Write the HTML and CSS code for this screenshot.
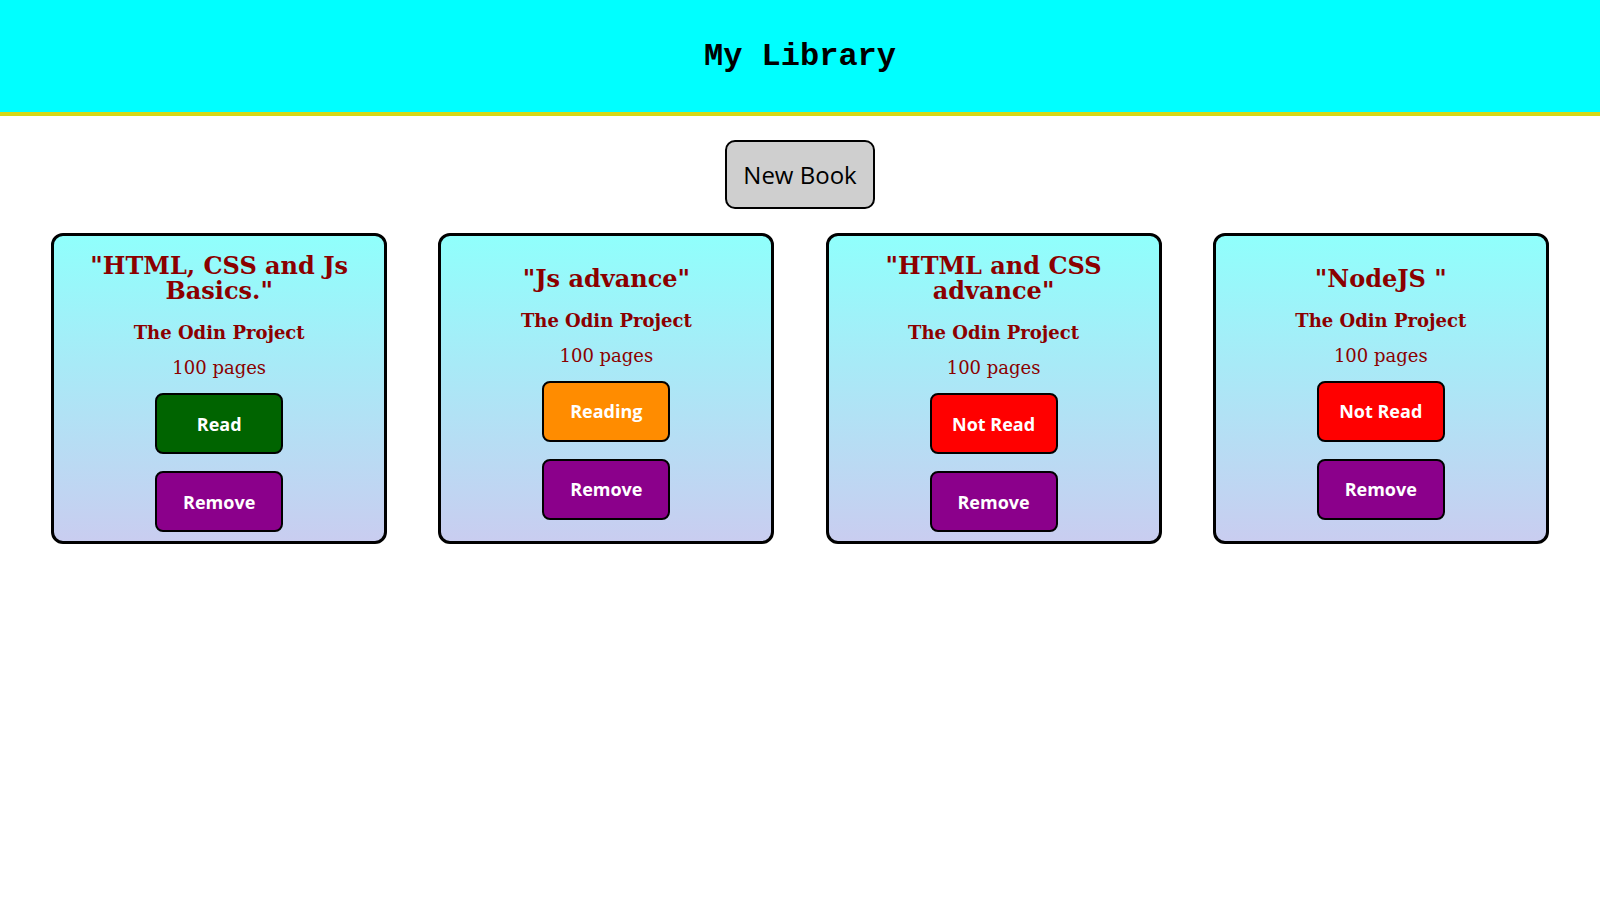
FILE: index.html
```html
<!DOCTYPE html>
<html lang="en">
<head>
<meta charset="utf-8">
<title>My Library</title>
<link rel="stylesheet" href="styles.css">
</head>
<body>
<header class="header">
  <h1 class="title">My Library</h1>
</header>
<main class="main">
  <div class="actions">
    <button class="new-book">New Book</button>
  </div>
  <section class="library">
    <article class="card">
      <h2 class="book-title">"HTML, CSS and Js Basics."</h2>
      <h3 class="book-author">The Odin Project</h3>
      <p class="book-pages">100 pages</p>
      <button class="btn btn-read">Read</button>
      <button class="btn btn-remove">Remove</button>
    </article>
    <article class="card">
      <h2 class="book-title">"Js advance"</h2>
      <h3 class="book-author">The Odin Project</h3>
      <p class="book-pages">100 pages</p>
      <button class="btn btn-reading">Reading</button>
      <button class="btn btn-remove">Remove</button>
    </article>
    <article class="card">
      <h2 class="book-title">"HTML and CSS advance"</h2>
      <h3 class="book-author">The Odin Project</h3>
      <p class="book-pages">100 pages</p>
      <button class="btn btn-not-read">Not Read</button>
      <button class="btn btn-remove">Remove</button>
    </article>
    <article class="card">
      <h2 class="book-title">"NodeJS "</h2>
      <h3 class="book-author">The Odin Project</h3>
      <p class="book-pages">100 pages</p>
      <button class="btn btn-not-read">Not Read</button>
      <button class="btn btn-remove">Remove</button>
    </article>
  </section>
</main>
</body>
</html>
```

FILE: styles.css
```css
* {
  box-sizing: border-box;
}

body {
  margin: 0;
  background: #ffffff;
  font-family: "DejaVu Serif", serif;
}

.header {
  height: 116px;
  background: #00ffff;
  border-bottom: 4px solid #d6d816;
  display: flex;
  align-items: center;
  justify-content: center;
}

.title {
  margin: 0;
  font-family: "Liberation Mono", monospace;
  font-size: 32px;
  font-weight: bold;
  color: #000000;
  line-height: 36px;
  padding-top: 1px;
}

.main {
  padding-top: 24px;
}

.actions {
  display: flex;
  justify-content: center;
}

.new-book {
  width: 150px;
  height: 69px;
  background: #cfcfcf;
  border: 2px solid #000000;
  border-radius: 10px;
  font-family: "Open Sans", sans-serif;
  font-size: 24px;
  color: #000000;
  padding: 0;
}

.library {
  display: flex;
  justify-content: space-evenly;
  align-items: stretch;
  margin-top: 24px;
}

.card {
  width: 336px;
  border: 3px solid #000000;
  border-radius: 12px;
  background: linear-gradient(#90fffc, #c9cdf0);
  padding: 17px 20px 9px;
  display: flex;
  flex-direction: column;
  align-items: center;
  justify-content: center;
  color: #8b0000;
  text-align: center;
}

.book-title {
  margin: 0;
  font-size: 24px;
  line-height: 25px;
  font-weight: bold;
}

.book-author {
  margin: 19px 0 0;
  font-size: 18px;
  line-height: 22px;
  font-weight: bold;
}

.book-pages {
  margin: 13px 0 0;
  font-size: 18px;
  line-height: 22px;
}

.btn {
  width: 128px;
  height: 61px;
  border: 2px solid #000000;
  border-radius: 8px;
  font-family: "Open Sans", sans-serif;
  font-size: 18px;
  font-weight: bold;
  color: #ffffff;
  padding: 0;
  flex-shrink: 0;
}

.btn-read,
.btn-reading,
.btn-not-read {
  margin-top: 14px;
}

.btn-remove {
  margin-top: 17px;
  background: #8b008b;
}

.btn-read {
  background: #006400;
}

.btn-reading {
  background: #ff8c00;
}

.btn-not-read {
  background: #ff0000;
}
```
